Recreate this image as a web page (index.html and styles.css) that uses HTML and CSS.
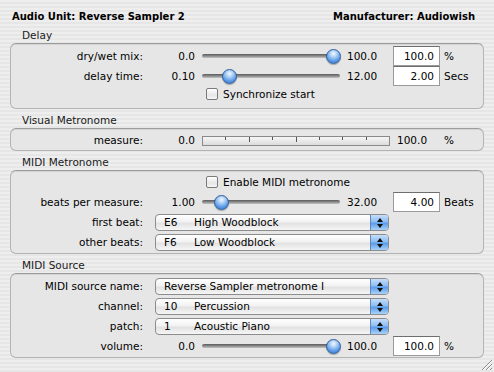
FILE: index.html
```html
<!DOCTYPE html>
<html lang="en">

<head>
    <meta charset="UTF-8">
    <title>Audio Unit: Reverse Sampler 2</title>
    <link rel="stylesheet" href="styles.css">
</head>

<body>
    <div class="window">
        <div class="header">
            <span>Audio Unit: Reverse Sampler 2</span>
            <span>Manufacturer: Audiowish</span>
        </div>

        <!-- Delay -->
        <div class="group-title">Delay</div>
        <div class="group-box delay-box">
            <div class="row">
                <div class="label">dry/wet mix:</div>
                <div class="min">0.0</div>
                <div class="slider"><div class="track"></div><div class="range"><div class="knob" style="left: 100%"></div></div></div>
                <div class="max">100.0</div>
                <div class="field-cell"><div class="field">100.0</div></div>
                <div class="unit">%</div>
            </div>
            <div class="row">
                <div class="label">delay time:</div>
                <div class="min">0.10</div>
                <div class="slider"><div class="track"></div><div class="range"><div class="knob" style="left: 16%"></div></div></div>
                <div class="max">12.00</div>
                <div class="field-cell"><div class="field">2.00</div></div>
                <div class="unit">Secs</div>
            </div>
            <div class="row check-row short">
                <div class="check"><span class="checkbox"></span>Synchronize start</div>
            </div>
        </div>

        <!-- Visual Metronome -->
        <div class="group-title">Visual Metronome</div>
        <div class="group-box meter-box">
            <div class="row">
                <div class="label">measure:</div>
                <div class="min">0.0</div>
                <div class="meter">
                    <span class="tick"></span><span class="tick long"></span><span class="tick"></span><span class="tick long"></span>
                    <span class="tick"></span><span class="tick"></span><span class="tick"></span>
                </div>
                <div class="max meter-max">100.0</div>
                <div class="unit">%</div>
            </div>
        </div>

        <!-- MIDI Metronome -->
        <div class="group-title">MIDI Metronome</div>
        <div class="group-box midi-box">
            <div class="row check-row">
                <div class="check"><span class="checkbox"></span>Enable MIDI metronome</div>
            </div>
            <div class="row">
                <div class="label">beats per measure:</div>
                <div class="min">1.00</div>
                <div class="slider"><div class="track"></div><div class="range"><div class="knob" style="left: 9.7%"></div></div></div>
                <div class="max">32.00</div>
                <div class="field-cell"><div class="field">4.00</div></div>
                <div class="unit">Beats</div>
            </div>
            <div class="row">
                <div class="label">first beat:</div>
                <div class="popup"><span class="code">E6</span><span class="name">High Woodblock</span><span class="arrows"></span></div>
            </div>
            <div class="row">
                <div class="label">other beats:</div>
                <div class="popup"><span class="code">F6</span><span class="name">Low Woodblock</span><span class="arrows"></span></div>
            </div>
        </div>

        <!-- MIDI Source -->
        <div class="group-title">MIDI Source</div>
        <div class="group-box source-box">
            <div class="row">
                <div class="label">MIDI source name:</div>
                <div class="popup"><span class="name">Reverse Sampler metronome I</span><span class="arrows"></span></div>
            </div>
            <div class="row">
                <div class="label">channel:</div>
                <div class="popup"><span class="code">10</span><span class="name">Percussion</span><span class="arrows"></span></div>
            </div>
            <div class="row">
                <div class="label">patch:</div>
                <div class="popup"><span class="code">1</span><span class="name">Acoustic Piano</span><span class="arrows"></span></div>
            </div>
            <div class="row">
                <div class="label">volume:</div>
                <div class="min">0.0</div>
                <div class="slider"><div class="track"></div><div class="range"><div class="knob" style="left: 100%"></div></div></div>
                <div class="max">100.0</div>
                <div class="field-cell"><div class="field">100.0</div></div>
                <div class="unit">%</div>
            </div>
        </div>

        <svg class="grip" width="14" height="14" viewBox="0 0 14 14">
            <path d="M13 3 L3 13 M13 7 L7 13 M13 11 L11 13" stroke="#8c8c8c" stroke-width="1" />
            <path d="M13 4 L4 13 M13 8 L8 13" stroke="#ffffff" stroke-width="1" />
        </svg>
    </div>
</body>

</html>
```

FILE: styles.css
```css
body {
    margin: 0;
    font-family: "DejaVu Sans", Verdana, sans-serif;
    font-size: 10.5px;
    color: #000;
}

.window {
    position: relative;
    width: 494px;
    height: 372px;
    box-sizing: border-box;
    padding: 9px 10px 0 10px;
    background: repeating-linear-gradient(#eeeeee 0, #eeeeee 2px, #e6e6e6 2px, #e6e6e6 4px);
    overflow: hidden;
}

.header {
    display: flex;
    justify-content: space-between;
    font-weight: bold;
    font-size: 10px;
    padding: 0 9px 0 2px;
    height: 15px;
    line-height: 15px;
}

.group-title {
    padding: 4px 0 0 12px;
    height: 15px;
    line-height: 15px;
    color: #1a1a1a;
}

.group-box {
    border: 1px solid #b4b4b4;
    border-top-color: #9c9c9c;
    border-radius: 6px;
    background: #e6e6e6;
    box-shadow: inset 0 1px 0 #d4d4d4;
}

.delay-box {
    padding: 2px 0 6px;
}

.meter-box {
    padding: 1px 0 0;
}

.midi-box {
    padding: 1px 0 1px;
}

.source-box {
    padding: 2px 0 1px;
}

.row {
    display: grid;
    grid-template-columns: 132px 53px 144px 50px 52px 1fr;
    align-items: center;
    height: 20px;
}

.label {
    text-align: right;
}

.min {
    text-align: right;
    padding-right: 1px;
}

.max {
    padding-left: 7px;
}

.unit {
    padding-left: 2px;
}

.slider {
    position: relative;
    height: 16px;
}

.track {
    margin: 6px 0 0 6px;
    height: 4px;
    border-radius: 2px;
    background: linear-gradient(#5a5a5a, #8a8a8a 50%, #c4c4c4);
}

.range {
    position: absolute;
    left: 13px;
    right: 7px;
    top: 0;
    height: 16px;
}

.knob {
    position: absolute;
    top: 1px;
    width: 15px;
    height: 15px;
    margin-left: -7px;
    border-radius: 50%;
    box-sizing: border-box;
    border: 1px solid #2e5d9c;
    background: radial-gradient(circle at 50% 28%, #f2f8ff 0, #b3d4f7 28%, #5595e4 68%, #3a77c8 100%);
    box-shadow: 0 1px 1px rgba(0, 0, 0, 0.3);
}

.field-cell {
    padding-left: 3px;
}

.field {
    width: 47px;
    height: 20px;
    box-sizing: border-box;
    border: 1px solid #9a9a9a;
    border-top-color: #6e6e6e;
    background: #fff;
    text-align: right;
    line-height: 18px;
    padding-right: 5px;
}

.check-row {
    display: flex;
    padding-left: 195px;
}

.check-row.short {
    height: 16px;
}

.check {
    display: flex;
    align-items: center;
}

.checkbox {
    display: inline-block;
    width: 12px;
    height: 12px;
    box-sizing: border-box;
    border: 1px solid #7a7a7a;
    border-radius: 2px;
    background: linear-gradient(#ffffff, #e6e6e6 60%, #f4f4f4);
    margin-right: 5px;
}

.meter {
    grid-column: 3 / 5;
    margin: 1px 0 0 6px;
    height: 10px;
    box-sizing: border-box;
    border: 1px solid #8a8a8a;
    background: linear-gradient(#f6f6f6, #dcdcdc);
    display: flex;
    justify-content: space-evenly;
    align-items: flex-start;
}

.tick {
    width: 1px;
    height: 3px;
    background: #555;
}

.tick.long {
    height: 5px;
}

.meter-max {
    grid-column: 5;
}

.popup {
    grid-column: 2 / 5;
    margin-left: 12px;
    margin-right: 1px;
    height: 17px;
    box-sizing: border-box;
    border: 1px solid #8c8c8c;
    border-radius: 4px;
    background: linear-gradient(#ffffff, #f2f2f2 45%, #e2e2e2 55%, #f6f6f6);
    display: flex;
    align-items: center;
    padding-left: 8px;
    position: relative;
    overflow: hidden;
}

.popup .code {
    width: 30px;
}

.arrows {
    position: absolute;
    right: 0;
    top: 0;
    bottom: 0;
    width: 17px;
    border-left: 1px solid #5d86bd;
    background: linear-gradient(#c6defa, #8ebdf2 45%, #5a9be8 55%, #a9d3fb);
}

.arrows::before,
.arrows::after {
    content: "";
    position: absolute;
    left: 6px;
    border-left: 3px solid transparent;
    border-right: 3px solid transparent;
}

.arrows::before {
    top: 3px;
    border-bottom: 4px solid #111;
}

.arrows::after {
    top: 9px;
    border-top: 4px solid #111;
}

.grip {
    position: absolute;
    right: 1px;
    bottom: 1px;
}
```
